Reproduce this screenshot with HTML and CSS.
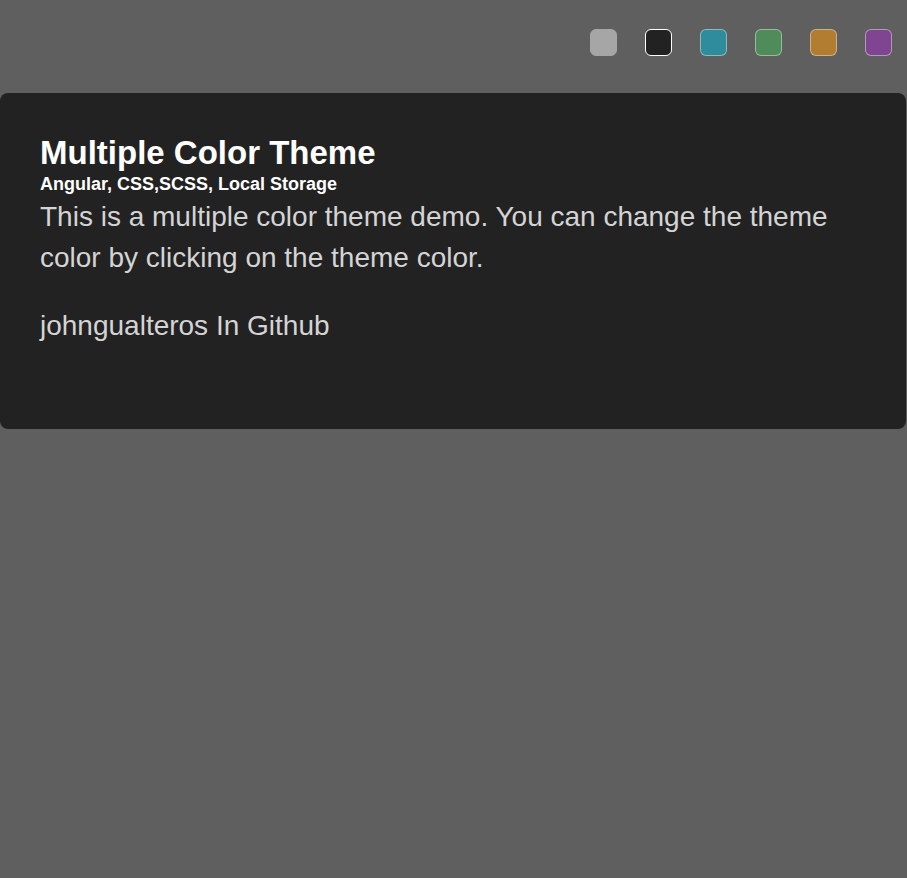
FILE: index.html
```html
<!DOCTYPE html>
<html lang="en">
<head>
<meta charset="utf-8">
<title>Multiple Color Theme</title>
<link rel="stylesheet" href="styles.css">
</head>
<body>
<header class="themes">
  <button class="swatch swatch-gray" aria-label="gray"></button>
  <button class="swatch swatch-dark active" aria-label="dark"></button>
  <button class="swatch swatch-teal" aria-label="teal"></button>
  <button class="swatch swatch-green" aria-label="green"></button>
  <button class="swatch swatch-orange" aria-label="orange"></button>
  <button class="swatch swatch-purple" aria-label="purple"></button>
</header>
<main class="card">
  <h1 class="title">Multiple Color Theme</h1>
  <h4 class="subtitle">Angular, CSS,SCSS, Local Storage</h4>
  <p class="text">This is a multiple color theme demo. You can change the theme color by clicking on the theme color.</p>
  <p class="text"><a class="link" href="#">johngualteros In Github</a></p>
</main>
</body>
</html>
```
FILE: styles.css
```css
html, body {
  margin: 0;
  padding: 0;
  background: #5f5f5f;
  font-family: "Liberation Sans", Arial, sans-serif;
}
body {
  min-height: 878px;
  padding-right: 1px;
}
.themes {
  display: flex;
  justify-content: flex-end;
  align-items: flex-start;
  gap: 28px;
  padding: 29px 14px 0 0;
  height: 93px;
  box-sizing: border-box;
}
.swatch {
  width: 27px;
  height: 27px;
  padding: 0;
  border-radius: 6px;
  border: 1px solid rgba(220, 220, 220, 0.55);
  box-sizing: border-box;
  cursor: pointer;
}
.swatch-gray { background: #a6a6a6; border-color: #a6a6a6; }
.swatch-dark { background: #222222; border-color: #ffffff; }
.swatch-teal { background: #2e8c9c; }
.swatch-green { background: #508c5a; }
.swatch-orange { background: #b27c31; }
.swatch-purple { background: #7f4590; }
.card {
  background: #222222;
  border-radius: 8px;
  height: 336px;
  box-sizing: border-box;
  padding: 41px 40px 0;
}
.title {
  margin: 0;
  color: #ffffff;
  font-size: 33px;
  font-weight: bold;
  line-height: 37px;
}
.subtitle {
  margin: 3px 0 2px;
  color: #ffffff;
  font-size: 18px;
  font-weight: bold;
  line-height: 20px;
}
.text {
  margin: 0 0 27px;
  color: #d4d4d4;
  font-size: 28px;
  line-height: 41px;
}
.link {
  color: #d4d4d4;
  text-decoration: none;
}
```
